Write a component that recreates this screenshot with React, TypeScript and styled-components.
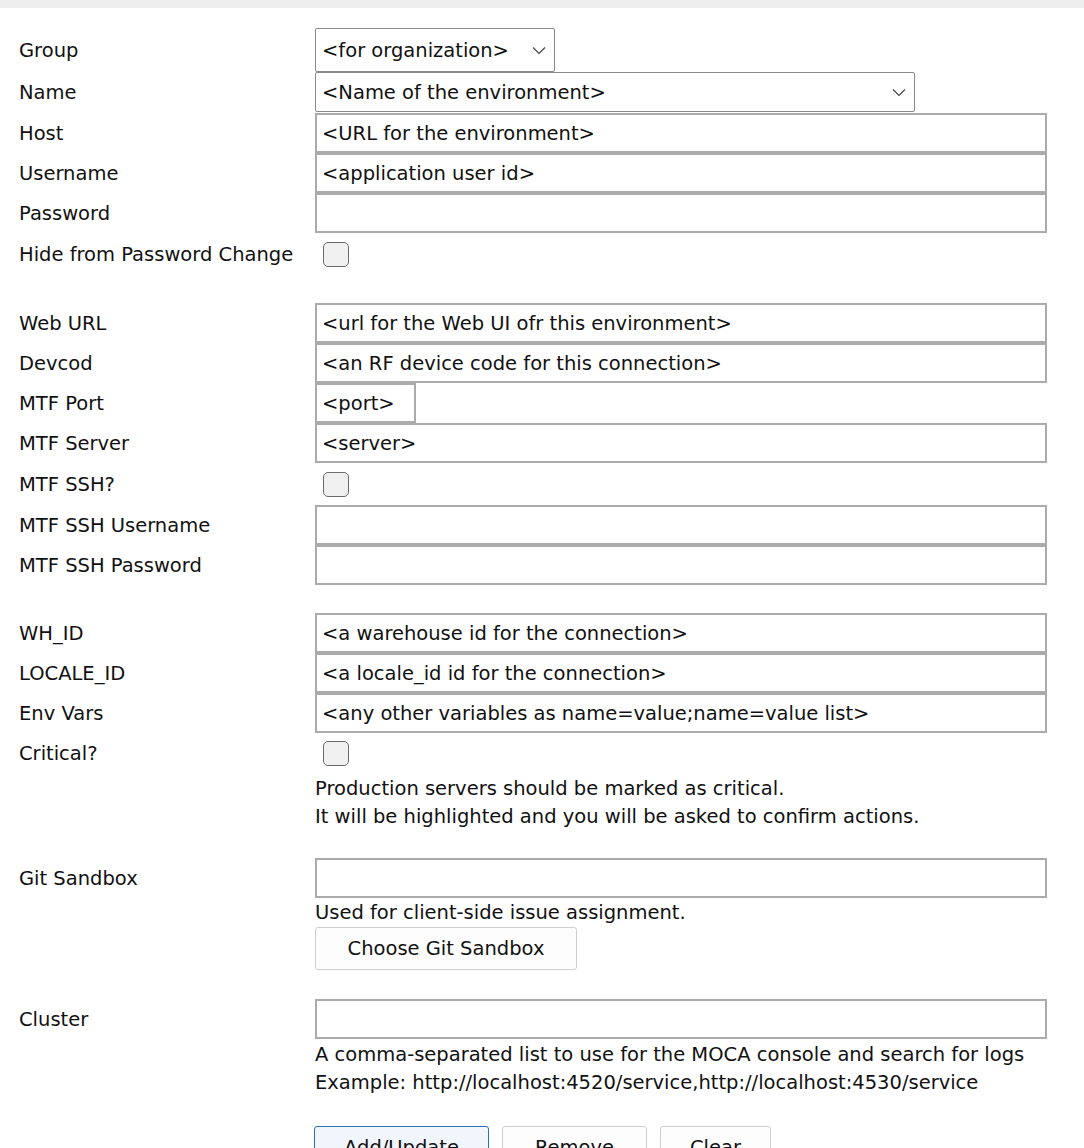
import React from "react";
import styled, { createGlobalStyle } from "styled-components";

const Global = createGlobalStyle`
  html, body { margin: 0; padding: 0; background: #fff; }
  body {
    font-family: "DejaVu Sans", "Liberation Sans", sans-serif;
    font-size: 19.5px;
    color: #111;
  }
  * { box-sizing: border-box; }
`;

const TopBar = styled.div`
  height: 8px;
  background: #eeeeee;
`;

const Form = styled.div`
  padding: 20px 0 0 19px;
  display: flex;
  flex-direction: column;
`;

const Row = styled.div`
  display: grid;
  grid-template-columns: 296px 732px;
  align-items: start;
`;

const Label = styled.div<{ $h: number }>`
  height: ${(p) => p.$h}px;
  display: flex;
  align-items: center;
  white-space: nowrap;
`;

const Control = styled.div`
  display: flex;
  flex-direction: column;
  align-items: flex-start;
`;

const Spacer = styled.div<{ $h: number }>`
  height: ${(p) => p.$h}px;
`;

const TextBox = styled.div<{ $w?: number }>`
  width: ${(p) => (p.$w ? `${p.$w}px` : "100%")};
  height: 40px;
  border: 2px solid #ababab;
  padding: 0 5px;
  display: flex;
  align-items: center;
  background: #fff;
  white-space: nowrap;
  overflow: hidden;
`;

const Select = styled.div<{ $w: number; $h: number }>`
  width: ${(p) => p.$w}px;
  height: ${(p) => p.$h}px;
  border: 1px solid #8a8a8a;
  border-radius: 2px;
  padding: 0 8px 0 6px;
  display: flex;
  align-items: center;
  justify-content: space-between;
  background: #fff;
  white-space: nowrap;
`;

const Check = styled.div`
  width: 26px;
  height: 25px;
  margin-left: 8px;
  border: 1.5px solid #6b6b6b;
  border-radius: 5px;
  background: #f0f0f0;
`;

const CheckCell = styled.div<{ $h: number }>`
  height: ${(p) => p.$h}px;
  display: flex;
  align-items: center;
`;

const Help = styled.div<{ $top?: number }>`
  padding-top: ${(p) => p.$top ?? 0}px;
  line-height: 28px;
  white-space: nowrap;
`;

const Button = styled.button<{ $w: number; $primary?: boolean }>`
  width: ${(p) => p.$w}px;
  height: 43px;
  font: inherit;
  color: #111;
  background: ${(p) => (p.$primary ? "#f1f6fc" : "#fdfdfd")};
  border: 1px solid ${(p) => (p.$primary ? "#2f6fb8" : "#cfcfcf")};
  border-radius: 3px;
  padding: 0;
`;

const ButtonBar = styled.div`
  display: flex;
  gap: 13px;
  margin-left: 295px;
`;

const Chevron = () => (
  <svg width="14" height="9" viewBox="0 0 14 9">
    <path d="M1 1.5 L7 7.5 L13 1.5" fill="none" stroke="#444" strokeWidth="1.2" />
  </svg>
);

const TextRow = ({ label, value, w }: { label: string; value?: string; w?: number }) => (
  <Row>
    <Label $h={40}>{label}</Label>
    <Control>
      <TextBox $w={w}>{value}</TextBox>
    </Control>
  </Row>
);

const CheckRow = ({ label }: { label: string }) => (
  <Row>
    <Label $h={42}>{label}</Label>
    <CheckCell $h={42}>
      <Check />
    </CheckCell>
  </Row>
);

export default function App() {
  return (
    <>
      <Global />
      <TopBar />
      <Form>
        <Row>
          <Label $h={44}>Group</Label>
          <Control>
            <Select $w={240} $h={44}>
              <span>&lt;for organization&gt;</span>
              <Chevron />
            </Select>
          </Control>
        </Row>
        <Row>
          <Label $h={40}>Name</Label>
          <Control>
            <Select $w={600} $h={40}>
              <span>&lt;Name of the environment&gt;</span>
              <Chevron />
            </Select>
          </Control>
        </Row>
        <Spacer $h={1} />
        <TextRow label="Host" value="<URL for the environment>" />
        <TextRow label="Username" value="<application user id>" />
        <TextRow label="Password" />
        <CheckRow label="Hide from Password Change" />
        <Spacer $h={28} />
        <TextRow label="Web URL" value="<url for the Web UI ofr this environment>" />
        <TextRow label="Devcod" value="<an RF device code for this connection>" />
        <TextRow label="MTF Port" value="<port>" w={101} />
        <TextRow label="MTF Server" value="<server>" />
        <CheckRow label="MTF SSH?" />
        <TextRow label="MTF SSH Username" />
        <TextRow label="MTF SSH Password" />
        <Spacer $h={28} />
        <TextRow label="WH_ID" value="<a warehouse id for the connection>" />
        <TextRow label="LOCALE_ID" value="<a locale_id id for the connection>" />
        <TextRow label="Env Vars" value="<any other variables as name=value;name=value list>" />
        <Row>
          <Label $h={40}>Critical?</Label>
          <Control>
            <CheckCell $h={40}>
              <Check />
            </CheckCell>
            <Help $top={2}>
              Production servers should be marked as critical.
              <br />
              It will be highlighted and you will be asked to confirm actions.
            </Help>
          </Control>
        </Row>
        <Spacer $h={27} />
        <Row>
          <Label $h={40}>Git Sandbox</Label>
          <Control>
            <TextBox />
            <Help $top={1}>Used for client-side issue assignment.</Help>
            <Button $w={262}>Choose Git Sandbox</Button>
          </Control>
        </Row>
        <Spacer $h={29} />
        <Row>
          <Label $h={40}>Cluster</Label>
          <Control>
            <TextBox />
            <Help $top={2}>
              A comma-separated list to use for the MOCA console and search for logs
              <br />
              Example: http://localhost:4520/service,http://localhost:4530/service
            </Help>
          </Control>
        </Row>
        <Spacer $h={29} />
        <ButtonBar>
          <Button $w={175} $primary>Add/Update</Button>
          <Button $w={145}>Remove</Button>
          <Button $w={111}>Clear</Button>
        </ButtonBar>
        <Spacer $h={40} />
      </Form>
    </>
  );
}
